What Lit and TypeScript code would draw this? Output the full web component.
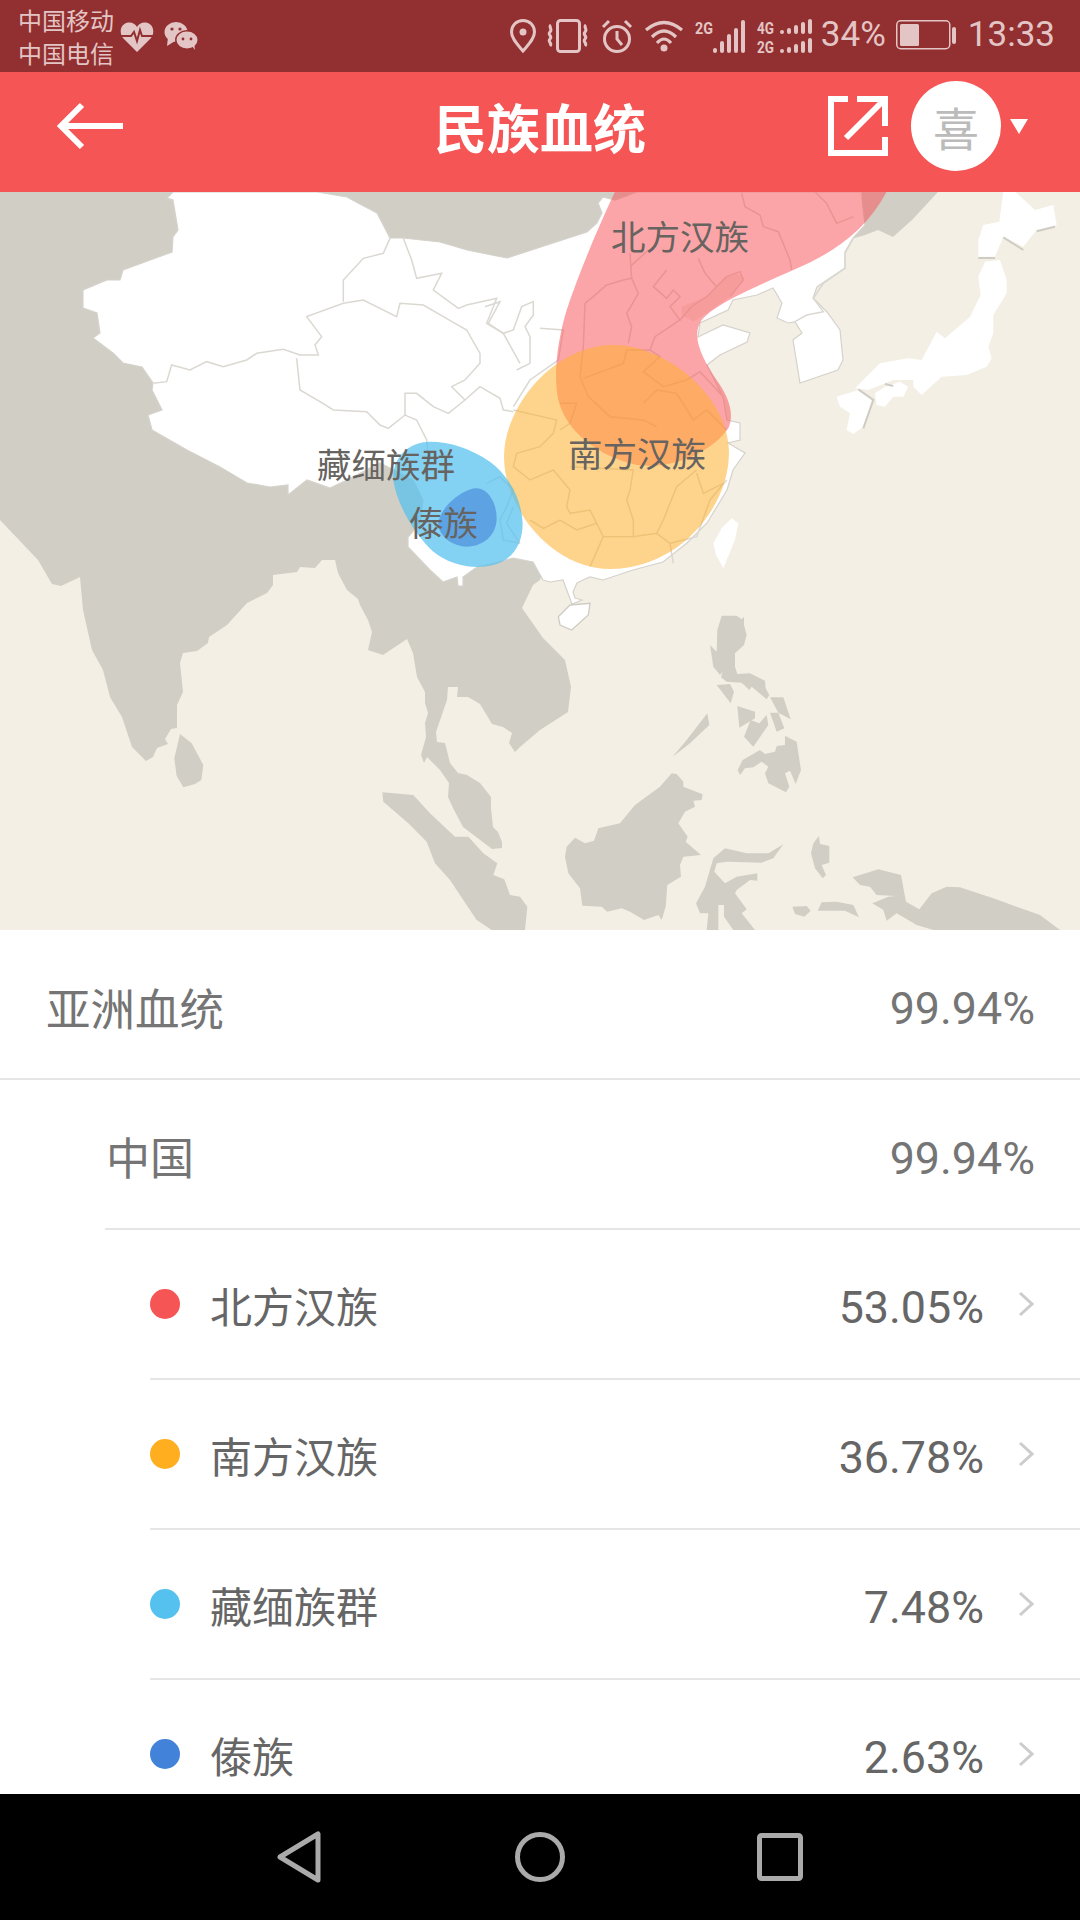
import {css, html, LitElement, svg} from 'lit';
import {customElement} from 'lit/decorators.js';

interface Row {
	label: string,
	value: string,
	level: 0 | 1 | 2,
	dot?: string,
}

const rows: Row[] = [
	{label: '亚洲血统', value: '99.94%', level: 0},
	{label: '中国', value: '99.94%', level: 1},
	{label: '北方汉族', value: '53.05%', level: 2, dot: '#f55555'},
	{label: '南方汉族', value: '36.78%', level: 2, dot: '#ffae1f'},
	{label: '藏缅族群', value: '7.48%', level: 2, dot: '#54c1ee'},
	{label: '傣族', value: '2.63%', level: 2, dot: '#4283d9'},
];

// outlines below are in the px of the crop they were traced from, so each group has its own origin
const scaled = (x: number, y: number) => `translate(${x} ${y}) scale(.33333)`;

const mainland = `0,192 0,520 38,560 52,584 61,586 80,577 83,610 92,650 103,670 110,697 122,717 132,747 146,761 153,757 157,748 168,744 165,739 171,729 177,728 177,705 183,692 180,663 183,653 197,651 208,643 209,637 227,625 247,603 267,593 273,585 273,575 297,572 300,567 315,568 322,560 335,560 338,573 347,590 358,599 360,605 368,620 372,632 368,650 383,655 407,639 413,653 417,677 425,692 425,703 428,713 425,723 426,737 421,755 424,763 427,757 440,770 449,783 448,797 453,808 463,827 492,849 502,848 502,842 498,832 493,827 491,808 491,797 480,783 467,775 458,773 450,763 445,743 437,742 436,732 447,700 448,687 458,687 457,697 468,697 480,704 492,724 503,727 512,733 509,743 515,752 520,747 540,730 568,712 571,687 565,660 543,638 522,608 533,585 540,580 600,400 780,260 865,235 878,230 893,237 912,220 938,192`;

const china = `167,198 173,192 317,192 347,197 358,203 377,213 390,238 403,238 440,242 467,250 507,258 553,243 587,232 597,223 602,213 598,203 603,197 615,200 637,192 862,192 862,198 865,225 853,238 845,252 845,268 827,280 817,287 813,298 827,312 840,330 843,360 838,370 800,383 793,340 802,333 795,322 788,323 777,318 782,303 773,288 757,295 733,300 728,310 700,323 698,337 723,325 750,333 747,342 720,355 707,365 723,397 727,420 740,423 740,440 728,443 745,453 733,470 727,490 707,523 687,543 663,562 633,570 603,580 590,577 583,580 577,583 573,592 575,598 582,600 572,604 563,580 550,582 543,580 533,562 513,558 495,563 477,567 463,577 463,586 458,586 457,577 443,582 430,570 408,547 408,537 420,523 423,500 413,480 380,463 347,480 330,488 307,480 288,495 288,485 270,487 247,483 220,467 187,450 152,430 148,415 162,410 152,390 153,383 142,367 123,363 113,353 93,338 100,333 97,313 83,308 83,290 107,280 120,280 123,270 172,252 173,237 178,230 173,200`;

// west half, crop origin 0,190
const westLines = [
	'460,580 500,575 515,525 570,540 620,515 670,530 740,510 770,490 850,478 900,495 955,495 945,465 965,440 920,380 1030,340 1090,330 1190,380 1200,340 1270,345 1330,380 1400,420 1440,490 1440,520 1395,570 1355,590 1395,630 1440,590 1500,625 1510,660 1540,665',
	'890,505 900,600 960,635 1000,660 1100,665 1140,705 1165,715 1215,675 1250,690 1280,750 1285,800',
	'1030,335 1030,270 1090,205 1150,190 1170,145',
	'1210,145 1235,210 1250,265 1325,250 1300,300 1375,355 1400,345 1490,325 1460,400 1510,430 1560,520',
	'1215,675 1215,610 1250,610 1300,650 1345,670 1395,630',
];

// middle, crop origin 300,190
const middleLines = [
	'555,350 600,335 565,400 610,430 640,420 665,350 700,335 700,375 675,410 690,440 690,520 650,540',
	'720,415 790,420 775,510 690,570 640,650',
	'640,660 770,690 760,730 720,770 650,790 640,830 690,870 760,840 810,900 800,950 810,970 870,960 890,1000 830,1020 780,990 730,1015 690,990',
	'810,830 1000,840 990,900 980,930 1000,990 1000,1040 1070,1030 1110,1060 1120,1120',
	'1190,840 1130,890 1090,990 1070,1030',
	'890,1000 910,1040 870,1130',
	'1000,1040 910,1040',
	'1280,870 1230,930 1190,1040 1110,1060',
	'1190,850 1210,910 1270,880',
	'560,880 600,860 640,900 620,950 600,990 610,1050 660,1060',
	'660,1060 620,1000 640,950',
];

// east half, crop origin 560,190
const eastLines = [
	'545,10 555,50 600,75 610,110 655,125 690,210 695,240',
	'210,190 215,265 235,310 200,370 215,410 205,460',
	'75,340 100,320 140,285 190,270 215,265',
	'75,340 70,470 60,560 85,620 150,680 250,690 290,710',
	'320,240 280,290 320,325 340,300 360,320 330,350 360,390 395,350 440,320 500,260 540,245 550,270 510,320',
	'260,185 210,230',
	'415,205 435,250 470,290',
	'360,390 285,440 270,480 200,480 190,520 70,565',
	'270,480 300,500 250,545 310,590 380,570 420,545 490,620',
	'250,640 290,600 350,610 400,690 440,660 500,720',
	'0,640 50,640 30,700 0,720',
	'880,145 855,190 855,235 790,280 760,325 790,365 740,375 705,395',
	'760,1 800,40 830,100 880,80',
];

const bohai = '530,250 555,265 510,320 440,370 400,395 365,375 365,350 440,320 490,265';

const japan = [
	'1330,5 1365,5 1425,60 1480,45 1490,105 1430,120 1390,170 1330,140 1305,200 1255,200 1255,150 1270,105 1318,95',
	'1275,215 1320,210 1340,270 1340,310 1300,375 1300,430 1285,470 1295,505 1280,530 1220,555 1145,560 1085,615 1060,590 1060,570 1000,570 925,600 885,595 960,520 1045,505 1085,510 1130,425 1155,445 1230,380 1262,315 1255,260',
	'945,610 975,590 1020,575 1045,590 1030,620 1000,620 975,650 950,645',
	'830,620 895,600 935,630 910,710 880,732 860,720 870,670 840,650',
	'515,985 535,1000 525,1050 490,1135 468,1095 460,1060 485,1015',
];
const japanShade = [
	'1255,204 1305,204',
	'1330,142 1390,180',
	'1430,124 1485,110',
	'895,598 940,630 910,715',
	'975,582 1000,588',
];

// crop origin 0,560
const southWest = [
	'540,522 575,550 610,615 604,660 585,672 550,682 530,648 523,595',
	'1147,697 1240,705 1290,760 1365,830 1405,830 1450,880 1492,910 1480,945 1513,958 1530,1005 1560,1010 1582,1040 1575,1110 1475,1110 1430,1080 1350,960 1305,910 1280,845 1225,790 1150,725',
];

// crop origin 520,560
const southEast = [
	'605,167 650,167 665,178 672,170 672,195 680,225 672,255 645,280 645,320 652,342 690,340 735,362 737,385 748,405 740,418 695,380 688,390 665,368 620,365 603,352 608,335 600,345 580,320 570,255 590,275 592,210',
	'590,375 630,372 642,395 632,430',
	'750,412 790,412 812,478 775,458',
	'750,458 775,458 793,505 770,515',
	'652,438 705,455 705,475 658,503',
	'740,465 745,495 700,560 672,530 692,480 718,490',
	'562,460 568,495 510,550 458,590 500,540',
	'795,527 830,545 843,630 827,672 810,632 795,640 808,680 798,697 745,670 735,640 745,620 725,605 700,622 675,625 660,645 653,630 668,600 720,570 735,582 765,575 770,558 795,555',
	'455,640 470,642 490,665 490,680 548,703 545,720 520,722 525,740 495,755 475,790 503,830 497,845 543,885 490,890 480,915 483,950 442,975 437,1040 425,1080 415,1065 372,1080 330,1055 305,1045 262,1055 245,1040 187,1037 180,985 145,940 135,890 140,860 165,833 195,850 222,842 235,805 300,790 345,735 420,680',
	'790,853 760,895 725,908 620,905 590,910 583,935 615,970 650,950 712,940 712,962 690,960 650,990 645,1000 680,1048 665,1060 705,1110 640,1110 612,1070 612,1035 595,1035 595,1110 560,1110 565,1060 540,1060 528,1030 555,980 580,895 615,865 680,880 745,880',
	'897,828 900,852 928,858 928,908 905,915 918,945 908,955 885,925 873,880 880,850',
	'817,1040 860,1038 872,1052 853,1070 825,1062',
	'905,1027 950,1025 1000,1035 1017,1072 975,1052 893,1052',
	'998,952 1075,928 1143,945 1158,1025 1198,1048 1235,1000 1280,980 1320,982 1420,1015 1560,1065 1620,1110 1240,1110 1190,1095 1130,1060 1100,1082 1090,1050 1057,1030 1105,1010 1128,1008 1070,1005 1050,980 1020,975',
	'0,1010 7,1040 0,1110',
];

const mapLabels = [
	{text: '北方汉族', x: 611, y: 250},
	{text: '南方汉族', x: 568, y: 467},
	{text: '藏缅族群', x: 317, y: 478},
	{text: '傣族', x: 409, y: 536},
];

const lines = (list: string[]) => list.map(p => svg`<polyline points=${p}></polyline>`);
const shapes = (list: string[]) => list.map(p => svg`<polygon points=${p}></polygon>`);

@customElement('app-root')
export class AppRoot extends LitElement {
	protected render() {
		return html`
			<div class="status">
				<div class="status-left">
					<div class="carriers"><span>中国移动</span><span>中国电信</span></div>
					${this.renderHeart()}
					${this.renderWechat()}
				</div>
				<div class="status-right">
					<div class="icons">
						${this.renderStatusIcons()}
					</div>
					<div class="sys">
						<span>34%</span>
						${this.renderBattery()}
						<span class="time">13:33</span>
					</div>
				</div>
			</div>
			<header>
				<div class="back">
					<svg width="68" height="48" viewBox="0 0 68 48" fill="none" stroke="#fff" stroke-width="6">
						<path d="M4 24H66M25 3 4 24l21 21"></path>
					</svg>
				</div>
				<h1>民族血统</h1>
				<div class="actions">
					<svg width="60" height="60" viewBox="0 0 60 60" fill="none" stroke="#fff" stroke-width="6">
						<path d="M20 3H3V57H57V41M57 30V3H29M57 3 18 42"></path>
					</svg>
					<div class="avatar">喜</div>
					<div class="caret"></div>
				</div>
			</header>
			${this.renderMap()}
			<section class="list">
				${rows.map(row => this.renderRow(row))}
			</section>
			<nav>
				<svg width="44" height="52" viewBox="0 0 44 52" fill="none" stroke="#aaa" stroke-width="5" stroke-linejoin="round">
					<path d="M41 3V49L3 26Z"></path>
				</svg>
				<svg class="home" width="50" height="52" viewBox="0 0 50 52" fill="none" stroke="#aaa" stroke-width="5">
					<circle cx="25" cy="26" r="22.5"></circle>
				</svg>
				<svg width="46" height="48" viewBox="0 0 46 48" fill="none" stroke="#aaa" stroke-width="5">
					<rect x="2.5" y="2.5" width="41" height="43" rx="2"></rect>
				</svg>
			</nav>
		`;
	}

	private renderRow(row: Row) {
		return html`
			<div class="row l${row.level}">
				<div class="row-inner">
					${row.dot ? html`<i class="dot" style="background:${row.dot}"></i>` : ''}
					<span class="label">${row.label}</span>
					<span class="value">${row.value}</span>
					${row.level === 2 ? html`
						<svg class="chevron" width="16" height="26" viewBox="0 0 16 26" fill="none" stroke="#ccc" stroke-width="3">
							<path d="M2 2 14 13 2 24"></path>
						</svg>` : ''}
				</div>
			</div>
		`;
	}

	private renderMap() {
		return html`
			<svg class="map" width="1080" height="738" viewBox="0 192 1080 738">
				<g fill="#d1cec6">
					<polygon points=${mainland}></polygon>
					<g transform=${scaled(0, 560)}>${shapes(southWest)}</g>
					<g transform=${scaled(520, 560)}>${shapes(southEast)}</g>
				</g>
				<polygon points=${china} fill="#fff" stroke="#d5d2cb" stroke-width="1.2"></polygon>
				<polygon transform=${scaled(560, 190)} points=${bohai} fill="#f3efe5"></polygon>
				<g transform=${scaled(560, 190)} fill="#fff">${shapes(japan)}</g>
				<polygon transform=${scaled(520, 560)} points="115,170 150,135 210,130 205,165 155,210 120,195" fill="#fff" stroke="#cfccc4" stroke-width="4"></polygon>
				<g fill="none" stroke="#dbd8d2" stroke-width="4.5">
					<g transform=${scaled(0, 190)}>${lines(westLines)}</g>
					<g transform=${scaled(300, 190)}>${lines(middleLines)}</g>
					<g transform=${scaled(560, 190)}>${lines(eastLines)}</g>
				</g>
				<g transform=${scaled(560, 190)} fill="none" stroke="#cfccc4" stroke-width="6">${lines(japanShade)}</g>
				<g transform=${scaled(300, 190)}>
					<path fill="#f9555b" opacity=".53" d="M945 5C900 100 840 240 800 360 770 460 760 560 775 630 800 730 900 800 1010 825 1130 840 1240 780 1285 715 1305 670 1285 620 1250 570 1210 510 1170 440 1205 390 1240 350 1320 310 1480 240 1600 190 1700 120 1760 5Z"></path>
					<path fill="#fdb02e" opacity=".55" d="M940 465C1100 465 1287 620 1287 790 1285 960 1130 1137 930 1137 760 1137 612 960 612 800 612 650 760 465 940 465Z"></path>
					<path fill="#54c1ee" opacity=".72" d="M390 755C320 755 275 810 280 870 290 940 340 1030 400 1085 450 1125 520 1140 580 1125 640 1110 668 1060 668 1000 665 930 630 860 570 815 510 775 450 755 390 755Z"></path>
					<path fill="#4283d9" opacity=".6" d="M530 895C565 895 590 940 590 985 590 1035 550 1070 500 1070 460 1070 415 1040 415 1000 420 950 490 895 530 895Z"></path>
				</g>
				${mapLabels.map(l => svg`<text class="map-label" x=${l.x} y=${l.y}>${l.text}</text>`)}
			</svg>
		`;
	}

	private renderHeart() {
		return html`
			<svg width="34" height="31" viewBox="0 0 34 31">
				<path fill="#e3c5c5" d="M17 31 3 17C-1 12 0 3 8 1.500 12 1 15 2.500 17 6 19 2.500 22 1 26 1.500 34 3 35 12 31 17Z"></path>
				<path fill="none" stroke="#922f30" stroke-width="2" d="M0 15H11L14 11 17 20 20 9 22 15H34"></path>
			</svg>
		`;
	}

	private renderWechat() {
		return html`
			<svg class="wechat" width="34" height="28" viewBox="0 0 34 28" fill="#e3c5c5">
				<ellipse cx="12" cy="10" rx="11.500" ry="10"></ellipse>
				<path d="M4 15 3 24 11 19Z"></path>
				<ellipse cx="23" cy="18" rx="12" ry="10" fill="#922f30"></ellipse>
				<ellipse cx="23" cy="18" rx="10.500" ry="8.500"></ellipse>
				<path d="M28 24 31 28 30 21Z"></path>
				<g fill="#922f30">
					<circle cx="8" cy="7" r="1.600"></circle>
					<circle cx="16" cy="7" r="1.600"></circle>
					<circle cx="19" cy="17" r="1.400"></circle>
					<circle cx="27" cy="17" r="1.400"></circle>
				</g>
			</svg>
		`;
	}

	private renderStatusIcons() {
		return html`
			<svg width="26" height="34" viewBox="0 0 26 34" fill="none" stroke="#e3c5c5" stroke-width="3">
				<path d="M13 1.500C6.500 1.500 1.500 6.500 1.500 13 1.500 20 8 26 13 32 18 26 24.500 20 24.500 13 24.500 6.500 19.500 1.500 13 1.500Z"></path>
				<circle cx="13" cy="13" r="3.500" fill="#e3c5c5" stroke="none"></circle>
			</svg>
			<svg width="43" height="34" viewBox="0 0 43 34" fill="none" stroke="#e3c5c5" stroke-width="3">
				<rect x="10.500" y="1.500" width="22" height="31" rx="3"></rect>
				<path d="M4 6C1 8 6 10 3 13S6 17 3 20 6 24 3 27"></path>
				<path d="M39 6C36 8 41 10 38 13S41 17 38 20 41 24 38 27"></path>
			</svg>
			<svg width="32" height="34" viewBox="0 0 32 34" fill="none" stroke="#e3c5c5" stroke-width="3">
				<circle cx="16" cy="20" r="12.500"></circle>
				<path d="M2 8 8 2M24 2 30 8M16 12V20L21 26"></path>
			</svg>
			<svg width="40" height="33" viewBox="0 0 40 33" fill="none" stroke="#e3c5c5" stroke-width="3.200">
				<path d="M2 10Q20-5 38 10M8 17Q20 5 32 17M13 23Q20 15 27 23"></path>
				<circle cx="20" cy="28" r="3.500" fill="#e3c5c5" stroke="none"></circle>
			</svg>
			<svg width="51" height="40" viewBox="0 -3 51 40" fill="#e3c5c5">
				<text class="net" x="0" y="15" textLength="18" lengthAdjust="spacingAndGlyphs">2G</text>
				<rect x="18" y="29" width="4" height="5" rx="2"></rect>
				<rect x="25" y="22" width="4" height="12" rx="2"></rect>
				<rect x="32" y="15" width="4" height="19" rx="2"></rect>
				<rect x="39" y="9" width="4" height="25" rx="2"></rect>
				<rect x="46" y="1" width="4" height="33" rx="2"></rect>
			</svg>
			<svg width="58" height="40" viewBox="0 -3 58 40" fill="#e3c5c5">
				<text class="net" x="0" y="15" textLength="17" lengthAdjust="spacingAndGlyphs">4G</text>
				<text class="net" x="0" y="34" textLength="17" lengthAdjust="spacingAndGlyphs">2G</text>
				${[0, 1].map(r => [4, 6, 9, 12, 15].map((h, i) => svg`
					<rect x=${23 + i * 7} y=${(r ? 34 : 15) - h} width="4" height=${h} rx="2"></rect>`))}
			</svg>
		`;
	}

	private renderBattery() {
		return html`
			<svg width="60" height="30" viewBox="0 0 60 30" fill="#e3c5c5">
				<rect x=".75" y=".75" width="53" height="28" rx="4" fill="none" stroke="#e3c5c5" stroke-width="1.500"></rect>
				<rect x="4" y="4" width="19" height="22" rx="1.500"></rect>
				<rect x="56" y="7" width="4" height="17" rx="2"></rect>
			</svg>
		`;
	}

	static styles = css`
		:host {
			display: flex;
			flex-direction: column;
			height: 1920px;
			overflow: hidden;
			background: #fff;
			font-family: 'Roboto', 'Noto Sans CJK SC', sans-serif;
		}

		.status {
			flex: none;
			height: 72px;
			display: flex;
			justify-content: space-between;
			align-items: center;
			background: #922f30;
			color: #e3c5c5;
			padding: 0 25px 0 18px;
		}
		.status-left, .status-right {
			display: flex;
			align-items: center;
		}
		.status-right { gap: 6px; }
		.carriers {
			display: flex;
			flex-direction: column;
			font: 24px/33px 'Noto Sans CJK SC', sans-serif;
			margin-right: 6px;
		}
		.wechat { margin-left: 10px; }
		.icons {
			display: flex;
			align-items: center;
			gap: 11px;
		}
		.sys {
			display: flex;
			align-items: center;
			gap: 10px;
			font-size: 35px;
			line-height: 40px;
			padding-bottom: 2px;
		}
		.time { margin-left: 2px; }
		.net {
			font: 700 16px 'Roboto', sans-serif;
		}

		header {
			flex: none;
			box-sizing: border-box;
			height: 120px;
			padding-bottom: 12px;
			display: grid;
			grid-template-columns: 1fr auto 1fr;
			align-items: center;
			background: #f55555;
			color: #fff;
		}
		.back {
			display: flex;
			padding-left: 57px;
		}
		h1 {
			margin: 0;
			font: 700 53px 'Noto Sans CJK SC', sans-serif;
		}
		.actions {
			display: flex;
			justify-content: flex-end;
			align-items: center;
			padding-right: 52px;
		}
		.avatar {
			width: 90px;
			height: 90px;
			margin-left: 23px;
			border-radius: 50%;
			background: #fff;
			color: #bbb;
			display: flex;
			align-items: center;
			justify-content: center;
			font: 46px 'Noto Sans CJK SC', sans-serif;
		}
		.caret {
			margin-left: 9px;
			border-top: 15px solid #fff;
			border-left: 9px solid transparent;
			border-right: 9px solid transparent;
		}

		.map {
			flex: none;
			display: block;
			background: #f3efe5;
		}
		.map-label {
			font: 34.5px 'Noto Sans CJK SC', sans-serif;
			fill: #666360;
		}

		.list {
			flex: 1;
			min-height: 0;
			overflow: hidden;
		}
		.row { height: 150px; }
		.row-inner {
			box-sizing: border-box;
			height: 150px;
			display: flex;
			align-items: center;
			border-bottom: 2px solid #e6e6e6;
			font-size: 44.8px;
			color: #757575;
		}
		.l0 .row-inner { padding: 4px 45px 0 46px; }
		.l1 .row-inner {
			margin-left: 105px;
			padding: 4px 45px 0 1px;
		}
		.l2 .row-inner {
			margin-left: 150px;
			padding: 0 46px 0 0;
			color: #666;
		}
		.value {
			position: relative;
			top: 2px;
		}
		.l2 .value { top: 3px; }
		.label {
			flex: 1;
			font-size: 44px;
			font-family: 'Noto Sans CJK SC', sans-serif;
		}
		.l0 .label { font-size: 44.5px; }
		.l2 .label { font-size: 42px; }
		.dot {
			width: 30px;
			height: 30px;
			border-radius: 50%;
			margin-right: 30px;
		}
		.chevron { margin-left: 34px; }

		nav {
			flex: none;
			height: 126px;
			display: flex;
			justify-content: center;
			align-items: center;
			gap: 193px;
			background: #000;
		}
		.home { margin: 0 -1px 0 1px; }
	`;
}
